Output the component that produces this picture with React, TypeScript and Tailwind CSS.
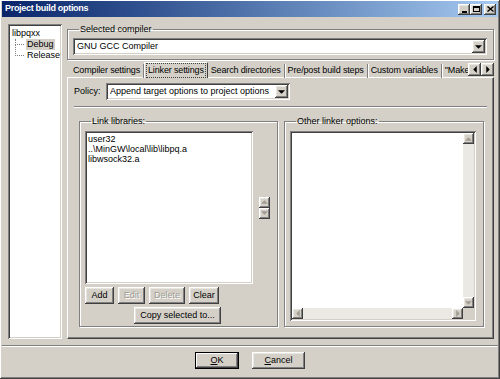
import type { ReactNode } from "react"

const raised =
  "bg-[#d4d0c8] shadow-[inset_-1px_-1px_#404040,inset_1px_1px_#ffffff,inset_-2px_-2px_#808080,inset_2px_2px_#e8e6e0]"
const sunken =
  "bg-white shadow-[inset_1px_1px_#808080,inset_-1px_-1px_#ffffff,inset_2px_2px_#404040,inset_-2px_-2px_#d4d0c8]"

const Arrow = ({ dir, color = "#000" }: { dir: "up" | "down" | "left" | "right"; color?: string }) => {
  const pts = {
    up: "0,3 3,0 6,3",
    down: "0,0 6,0 3,3",
    left: "3,0 3,6 0,3",
    right: "0,0 0,6 3,3",
  }[dir]
  const w = dir === "up" || dir === "down" ? 7 : 4
  const h = dir === "up" || dir === "down" ? 4 : 7
  return (
    <svg width={w} height={h} viewBox={`0 0 ${w - 1} ${h - 1}`}>
      <polygon points={pts} fill={color} />
    </svg>
  )
}

const Btn = ({ children, w, disabled, def }: { children: ReactNode; w: string; disabled?: boolean; def?: boolean }) => (
  <div
    className={`${w} h-[17px] flex items-center justify-center whitespace-nowrap ${
      def
        ? "bg-[#d4d0c8] border border-black shadow-[inset_-1px_-1px_#404040,inset_1px_1px_#ffffff,inset_-2px_-2px_#808080]"
        : raised
    } ${disabled ? "text-[#a09c94] [text-shadow:1px_1px_#ffffff]" : "text-black"}`}
  >
    {children}
  </div>
)

const Combo = ({ text, w }: { text: string; w: string }) => (
  <div className={`${w} h-[17px] ${sunken} flex items-center pl-[4px] pr-[2px]`}>
    <span className="flex-1 truncate">{text}</span>
    <div className={`w-[13px] h-[13px] ${raised} flex items-center justify-center`}>
      <Arrow dir="down" />
    </div>
  </div>
)

const Group = ({ title, className, children }: { title: string; className: string; children: ReactNode }) => (
  <fieldset className={`border border-[#808080] shadow-[1px_1px_0_#ffffff,inset_1px_1px_0_#ffffff] ${className}`}>
    <legend className="ml-[6px] px-[1px] leading-[11px]">{title}</legend>
    {children}
  </fieldset>
)

const SmallBtn = ({ dir }: { dir: "up" | "down" | "left" | "right" }) => (
  <div className={`w-[11px] h-[11px] ${raised} flex items-center justify-center`}>
    <Arrow dir={dir} color="#a09c94" />
  </div>
)

export default function App() {
  const tabs = ["Compiler settings", "Linker settings", "Search directories", "Pre/post build steps", "Custom variables"]
  return (
    <div className="w-[500px] h-[379px] overflow-hidden bg-[#d4d0c8] font-['Liberation_Sans',Arial,sans-serif] text-[9px] text-black shadow-[inset_-1px_-1px_#404040,inset_1px_1px_#ffffff,inset_-2px_-2px_#808080]">
      {/* title bar */}
      <div className="mx-[2px] mt-[1px] h-[16px] bg-linear-to-r from-[#0a246a] to-[#a6caf0] flex items-center pl-[3px] pr-[2px]">
        <span className="flex-1 text-white font-bold text-[9px] tracking-[-0.3px]">Project build options</span>
        <div className="flex items-center">
          <div className={`w-[12px] h-[11px] ${raised} flex items-end justify-center pb-[2px]`}>
            <div className="w-[5px] h-[2px] bg-black" />
          </div>
          <div className={`w-[12px] h-[11px] ${raised} flex items-center justify-center`}>
            <div className="w-[7px] h-[6px] border border-black border-t-2" />
          </div>
          <div className={`ml-[2px] w-[12px] h-[11px] ${raised} flex items-center justify-center`}>
            <svg width="7" height="6" viewBox="0 0 7 6">
              <path d="M0.5 0.5 L6.5 5.5 M6.5 0.5 L0.5 5.5" stroke="#000" strokeWidth="1.4" />
            </svg>
          </div>
        </div>
      </div>

      <div className="flex pl-[8px] pt-[7px]">
        {/* tree */}
        <div className={`w-[54px] h-[315px] ${sunken} pt-[4px] pl-[4px] leading-[11px] whitespace-nowrap overflow-hidden`}>
          <div>libpqxx</div>
          <div className="flex">
            <div className="ml-[3px] w-[9px] h-[6px] border-l border-b border-dotted border-[#808080]" />
            <span className="ml-[2px] bg-[#d4d0c8] px-[1px]">Debug</span>
          </div>
          <div className="flex -mt-[5px]">
            <div className="ml-[3px] w-[9px] h-[11px] border-l border-b border-dotted border-[#808080]" />
            <span className="ml-[3px] mt-[5px]">Release</span>
          </div>
        </div>

        {/* right column */}
        <div className="ml-[5px] w-[427px] flex flex-col">
          <Group title="Selected compiler" className="w-[427px] px-[5px] pb-[4px]">
            <div className="mt-[3px]">
              <Combo text="GNU GCC Compiler" w="w-[414px]" />
            </div>
          </Group>

          {/* tabs */}
          <div className="mt-[2px] h-[16px] flex items-end pl-[3px] relative z-10 whitespace-nowrap tracking-[-0.15px]">
            {tabs.map((t, i) =>
              i === 1 ? (
                <div key={t} className="shrink-0 h-[16px] px-[2px] flex items-center border border-b-0 border-t-white border-l-white border-r-[#404040] bg-[#d4d0c8]">
                  <span className="px-[1px] outline outline-1 outline-dotted outline-[#404040]">{t}</span>
                </div>
              ) : (
                <div key={t} className="shrink-0 h-[14px] px-[3px] flex items-center border-r border-[#808080] shadow-[1px_0_0_#ffffff]">
                  {t}
                </div>
              )
            )}
            <div className="h-[14px] pl-[3px] flex items-center overflow-hidden flex-1 min-w-0">"Make</div>
            <div className="flex mb-[2px] shrink-0">
              <div className={`w-[13px] h-[13px] ${raised} flex items-center justify-center`}>
                <Arrow dir="left" />
              </div>
              <div className={`w-[13px] h-[13px] ${raised} flex items-center justify-center`}>
                <Arrow dir="right" />
              </div>
            </div>
          </div>

          {/* tab page */}
          <div className="w-[427px] h-[262px] -mt-[1px] border border-t-white border-l-white border-r-[#404040] border-b-[#404040] shadow-[inset_-1px_-1px_#808080]">
            <div className="flex items-center pt-[5px] pl-[6px]">
              <span className="w-[32px]">Policy:</span>
              <Combo text="Append target options to project options" w="w-[184px]" />
            </div>
            <div className="mx-[6px] mt-[6px] h-[2px] border-t border-t-[#808080] border-b border-b-white" />

            <div className="flex gap-[6px] pl-[11px] mt-[8px]">
              <Group title="Link libraries:" className="w-[199px] h-[211px] pl-[5px]">
                <div className="flex items-center mt-[4px]">
                  <div className={`w-[168px] h-[153px] ${sunken} px-[3px] pt-[3px] leading-[10px] text-black`}>
                    <div>user32</div>
                    <div>..\MinGW\local\lib\libpq.a</div>
                    <div>libwsock32.a</div>
                  </div>
                  <div className="ml-[6px] flex flex-col">
                    <SmallBtn dir="up" />
                    <SmallBtn dir="down" />
                  </div>
                </div>
                <div className="flex gap-[4px] mt-[3px]">
                  <Btn w="w-[29px]">Add</Btn>
                  <Btn w="w-[27px]" disabled>Edit</Btn>
                  <Btn w="w-[36px]" disabled>Delete</Btn>
                  <Btn w="w-[30px]">Clear</Btn>
                </div>
                <div className="flex mt-[3px] pl-[49px]">
                  <Btn w="w-[87px]">Copy selected to...</Btn>
                </div>
              </Group>

              <Group title="Other linker options:" className="w-[200px] h-[211px] pl-[5px]">
                <div className={`mt-[4px] w-[186px] h-[190px] ${sunken} p-[2px] flex flex-col`}>
                  <div className="flex-1 flex">
                    <div className="flex-1" />
                    <div className="w-[11px] flex flex-col bg-[#ebe9e4]">
                      <SmallBtn dir="up" />
                      <div className="flex-1" />
                      <SmallBtn dir="down" />
                    </div>
                  </div>
                  <div className="h-[11px] flex">
                    <div className="flex-1 flex bg-[#ebe9e4]">
                      <SmallBtn dir="left" />
                      <div className="flex-1" />
                      <SmallBtn dir="right" />
                    </div>
                    <div className="w-[11px] bg-[#d4d0c8]" />
                  </div>
                </div>
              </Group>
            </div>
          </div>
        </div>
      </div>

      {/* bottom */}
      <div className="mx-[2px] mt-[6px] h-[2px] border-t border-t-[#808080] border-b border-b-white" />
      <div className="flex pl-[195px] gap-[13px] mt-[5px]">
        <Btn w="w-[44px]" def>
          <span><u>O</u>K</span>
        </Btn>
        <Btn w="w-[53px]">
          <span><u>C</u>ancel</span>
        </Btn>
      </div>
    </div>
  )
}
